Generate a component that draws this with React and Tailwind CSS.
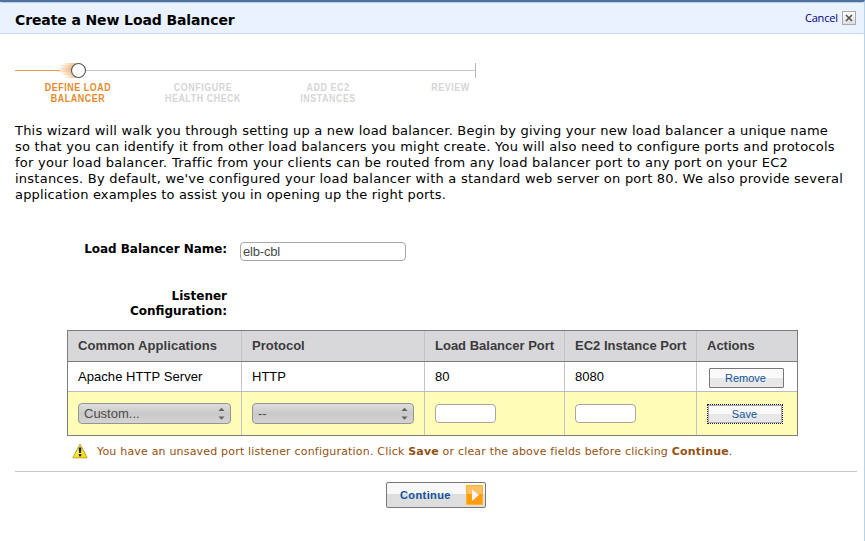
import React from "react";

const steps = [
  { lines: ["DEFINE LOAD", "BALANCER"], active: true, box: "w-[126px]" },
  { lines: ["CONFIGURE", "HEALTH CHECK"], box: "w-[124px]" },
  { lines: ["ADD EC2", "INSTANCES"], box: "w-[126px]" },
  { lines: ["REVIEW"], box: "w-[119px]" },
];

const cols = "grid grid-cols-[174px_183px_140px_132px_100px]";
const cell = "border-r border-[#c4c4c6] pl-[10px] last:border-r-0";

function Steps() {
  return (
    <div className="h-[60px]">
      <svg className="block" width="480" height="20" viewBox="0 0 480 20">
        <defs>
          <linearGradient id="trail" x1="0" x2="1">
            <stop offset="0" stopColor="#f0a050" stopOpacity="0" />
            <stop offset="1" stopColor="#eca362" stopOpacity="0.75" />
          </linearGradient>
        </defs>
        <path d="M15 10.5H60" stroke="#e99b49" />
        <path d="M84 10.5H475" stroke="#c9c9c9" />
        <path d="M475.5 3V18" stroke="#b8b8b8" />
        <g fill="url(#trail)">
          <rect x="62" y="3" width="14" height="2" />
          <rect x="59" y="5" width="14" height="3" />
          <rect x="57" y="8" width="14" height="2" />
          <rect x="55" y="10" width="17" height="2" />
          <rect x="60" y="12" width="14" height="3" />
          <rect x="64" y="15" width="12" height="3" />
        </g>
        <circle cx="78.5" cy="10.5" r="7" fill="#fff" stroke="#555" strokeWidth="1.1" />
      </svg>
      <div className="flex pt-[2px] pl-[15px] font-['Liberation_Sans',sans-serif] text-[11.5px] leading-[11px] font-bold tracking-[0.75px]">
        {steps.map((s) => (
          <div key={s.lines[0]} className={`${s.box} shrink-0 text-center whitespace-nowrap ${s.active ? "text-[#e58a2c]" : "text-[#d6d6d6]"}`}>
            {s.lines.map((l) => (
              <div key={l} className="origin-center scale-x-[0.77]">{l}</div>
            ))}
          </div>
        ))}
      </div>
    </div>
  );
}

function Select({ width, children }) {
  return (
    <div className={`${width} flex h-[21px] items-center justify-between rounded-[4px] border border-[#949494] bg-linear-to-b from-[#dedede] via-[#c9c9c9] to-[#d4d4d4] pr-[5px] pl-[5px] text-[13px] text-[#4c4c4c]`}>
      <span>{children}</span>
      <svg width="7" height="13" viewBox="0 0 7 13" fill="#606060">
        <path d="M0.5 4L3.5 0.8L6.5 4ZM0.5 9.5L3.5 12.7L6.5 9.5Z" />
      </svg>
    </div>
  );
}

function Field({ className, children }) {
  return (
    <div className={`${className} h-[19px] rounded-[4px] border border-[#a9a5a0] bg-white pl-[2px] font-['Liberation_Sans',sans-serif] text-[13px] leading-[18px] tracking-[-0.2px] text-[#4a4a4a]`}>
      {children}
    </div>
  );
}

function ListenerTable() {
  return (
    <div className="ml-[67px] h-[106px] w-[731px] border border-[#7c7c7c] font-['Liberation_Sans',sans-serif] text-[13px] text-black">
      <div className={`${cols} h-[31px] border-b border-[#7c7c7c] bg-[#d8d8da] leading-[30px] font-bold text-[#3b3b3d] whitespace-nowrap`}>
        <div className={`${cell} tracking-[0.08px]`}>Common Applications</div>
        <div className={cell}>Protocol</div>
        <div className={cell}>Load Balancer Port</div>
        <div className={cell}>EC2 Instance Port</div>
        <div className={cell}>Actions</div>
      </div>
      <div className={`${cols} h-[30px] border-b border-[#bbb] leading-[29px]`}>
        <div className={`${cell} tracking-[0.06px]`}>Apache HTTP Server</div>
        <div className={cell}>HTTP</div>
        <div className={cell}>80</div>
        <div className={cell}>8080</div>
        <div className={`${cell} pt-[6px]`}>
          <button className="ml-[2px] block h-[20px] w-[75px] rounded-[1px] border border-[#777] bg-linear-to-b from-[#fafafa] from-50% to-[#e8e8e8] to-50% pr-[2px] text-[11px] leading-[18px] text-[#10529b]">Remove</button>
        </div>
      </div>
      <div className={`${cols} h-[43px] bg-[#fffdb8]`}>
        <div className={`${cell} pt-[11px]`}><Select width="w-[153px]">Custom...</Select></div>
        <div className={`${cell} pt-[11px]`}><Select width="w-[162px]">--</Select></div>
        <div className={`${cell} pt-[12px]`}><Field className="w-[61px]" /></div>
        <div className={`${cell} pt-[12px]`}><Field className="w-[61px]" /></div>
        <div className={`${cell} pt-[12px]`}>
          <button className="block h-[20px] w-[76px] border border-dotted border-[#222] bg-linear-to-b from-[#fafafa] from-50% to-[#e8e8e8] to-50% pr-px text-[11px] leading-[18px] tracking-[0.1px] text-[#10529b] outline-1 -outline-offset-2 outline-[#aaa]">Save</button>
        </div>
      </div>
    </div>
  );
}

function Warning() {
  return (
    <div className="mt-[6px] ml-[72px] flex h-[18px] items-center text-[11px] tracking-[0.19px] whitespace-nowrap text-[#94520f]">
      <svg className="mr-[9px] shrink-0" width="16" height="16" viewBox="0 0 16 16">
        <defs>
          <linearGradient id="warn" x1="0" y1="0" x2="1" y2="1">
            <stop offset="0.2" stopColor="#fff48a" />
            <stop offset="0.7" stopColor="#f7df08" />
          </linearGradient>
        </defs>
        <path d="M8 1L15.2 14.8H0.8Z" fill="url(#warn)" stroke="#c4a236" strokeLinejoin="round" />
        <path d="M6.6 4.6H9.4L8.9 10H7.2ZM6.9 11H9.2V13.3H6.9Z" fill="#222" />
      </svg>
      <span className="pt-[2px]">You have an unsaved port listener configuration. Click <b>Save</b> or clear the above fields before clicking <b>Continue</b>.</span>
    </div>
  );
}

export default function App() {
  return (
    <div className="h-[541px] w-[865px] overflow-hidden border-t-2 border-r border-t-[#50709d] border-r-[#b4d2e8] bg-white font-['DejaVu_Sans',sans-serif] text-black">
      <header className="flex h-[32px] items-center justify-between rounded-t-[3px] border-t border-b border-t-[#b5cfe8] border-b-[#c9deef] bg-[#eaf2ff] pr-[8px] pl-[15px]">
        <h1 className="pt-[4px] text-[14px] font-bold tracking-[-0.11px]">Create a New Load Balancer</h1>
        <div className="flex items-center gap-[4px] font-['Open_Sans',sans-serif] text-[11px] tracking-[-0.15px] text-[#00007c]">
          <span>Cancel</span>
          <span className="flex h-[14px] w-[14px] items-center justify-center border border-[#aaa] bg-linear-to-b from-white to-[#ddd]">
            <svg width="8" height="8" viewBox="0 0 8 8"><path d="M1 1L7 7M7 1L1 7" stroke="#555" strokeWidth="1.7" /></svg>
          </span>
        </div>
      </header>
      <div className="pt-[26px]"><Steps /></div>
      <p className="mt-[3px] ml-[15px] text-[13px] leading-[16px] whitespace-nowrap">
        <span className="tracking-[0.212px]">This wizard will walk you through setting up a new load balancer. Begin by giving your new load balancer a unique name</span><br />
        <span className="tracking-[0.24px]">so that you can identify it from other load balancers you might create. You will also need to configure ports and protocols</span><br />
        <span className="tracking-[0.25px]">for your load balancer. Traffic from your clients can be routed from any load balancer port to any port on your EC2</span><br />
        <span className="tracking-[0.24px]">instances. By default, we've configured your load balancer with a standard web server on port 80. We also provide several</span><br />
        <span className="tracking-[0.17px]">application examples to assist you in opening up the right ports.</span>
      </p>
      <div className="mt-[39px] flex">
        <div className="w-[227px] text-right text-[12px] leading-[15px] font-bold tracking-[-0.05px]">Load Balancer Name:</div>
        <Field className="ml-[13px] w-[166px]">elb-cbl</Field>
      </div>
      <div className="mt-[28px] mb-[11px] w-[227px] text-right text-[12px] leading-[15px] font-bold">Listener<br />Configuration:</div>
      <ListenerTable />
      <Warning />
      <div className="mt-[11px] mr-[7px] ml-[15px] border-t border-[#c8c8c8]" />
      <button className="mt-[10px] ml-[386px] flex h-[26px] w-[100px] items-center justify-between rounded-[2px] border border-[#777] bg-linear-to-b from-[#f8f8f8] from-45% to-[#dedede] to-45% pr-[2px] pl-[13px] font-['Liberation_Sans',sans-serif] text-[11px] font-bold tracking-[0.4px] text-[#10529b]">
        Continue
        <svg width="17" height="20" viewBox="0 0 17 20">
          <rect width="17" height="20" fill="#ff9c0c" />
          <rect width="17" height="9" fill="#ffbf63" />
          <rect x="0.5" y="0.5" width="16" height="19" fill="none" stroke="#ffb629" />
          <path d="M6 4.5L13 10L6 16Z" fill="#f4f4fa" />
        </svg>
      </button>
    </div>
  );
}
